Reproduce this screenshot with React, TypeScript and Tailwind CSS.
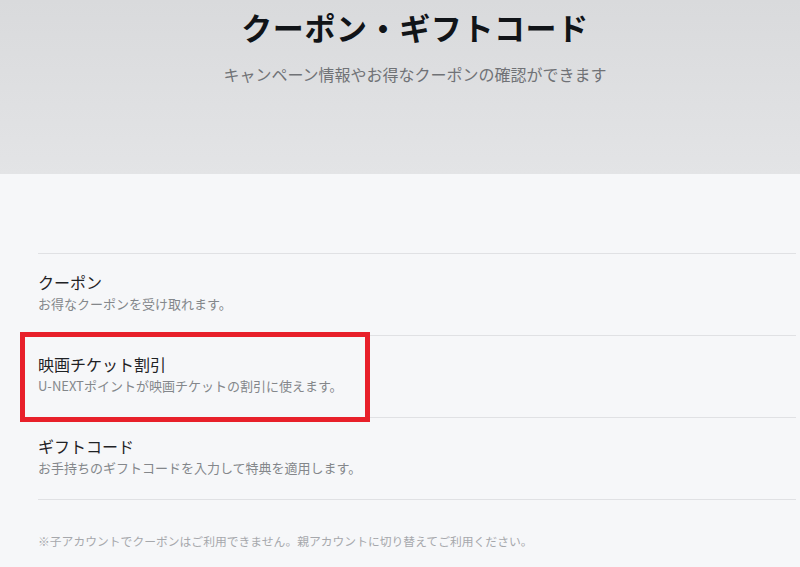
import React from 'react';

const items = [
  { title: 'クーポン', desc: 'お得なクーポンを受け取れます。' },
  { title: '映画チケット割引', desc: 'U-NEXTポイントが映画チケットの割引に使えます。', highlight: true },
  { title: 'ギフトコード', desc: 'お手持ちのギフトコードを入力して特典を適用します。' },
];

const font = { fontFamily: '"Noto Sans CJK JP", "Noto Sans", sans-serif' };

export default function App() {
  return (
    <div className="w-[800px] h-[567px] overflow-hidden bg-[#f6f7f9]" style={font}>
      <header className="h-[174px] bg-gradient-to-b from-[#d9dadc] to-[#e3e4e6] pl-[30px] flex flex-col items-center">
        <h1 className="mt-[5px] text-[31px] leading-[44px] font-bold text-[#111418] tracking-[0.6px]">
          クーポン・ギフトコード
        </h1>
        <p className="mt-[13px] text-[16px] leading-[24px] text-[#707276]">
          キャンペーン情報やお得なクーポンの確認ができます
        </p>
      </header>

      <main className="ml-[38px] mr-[4px] pt-[79px]">
        <ul>
          {items.map((item) => (
            <li key={item.title} className="relative border-t border-[#e0e1e4] pt-[16px] pb-[21px]">
              <div className="text-[16px] leading-[24px] text-[#1f2225]">{item.title}</div>
              <div className="text-[13px] leading-[20px] text-[#84878b]">{item.desc}</div>
              {item.highlight && (
                <span className="absolute z-10 -top-[4px] -left-[18px] w-[350px] h-[90px] border-[5px] border-[#e8202a]" />
              )}
            </li>
          ))}
        </ul>
        <div className="border-t border-[#e0e1e4] pt-[32px]">
          <p className="text-[11.8px] leading-[18px] text-[#a6a8ac]">
            ※子アカウントでクーポンはご利用できません。親アカウントに切り替えてご利用ください。
          </p>
        </div>
      </main>
    </div>
  );
}
